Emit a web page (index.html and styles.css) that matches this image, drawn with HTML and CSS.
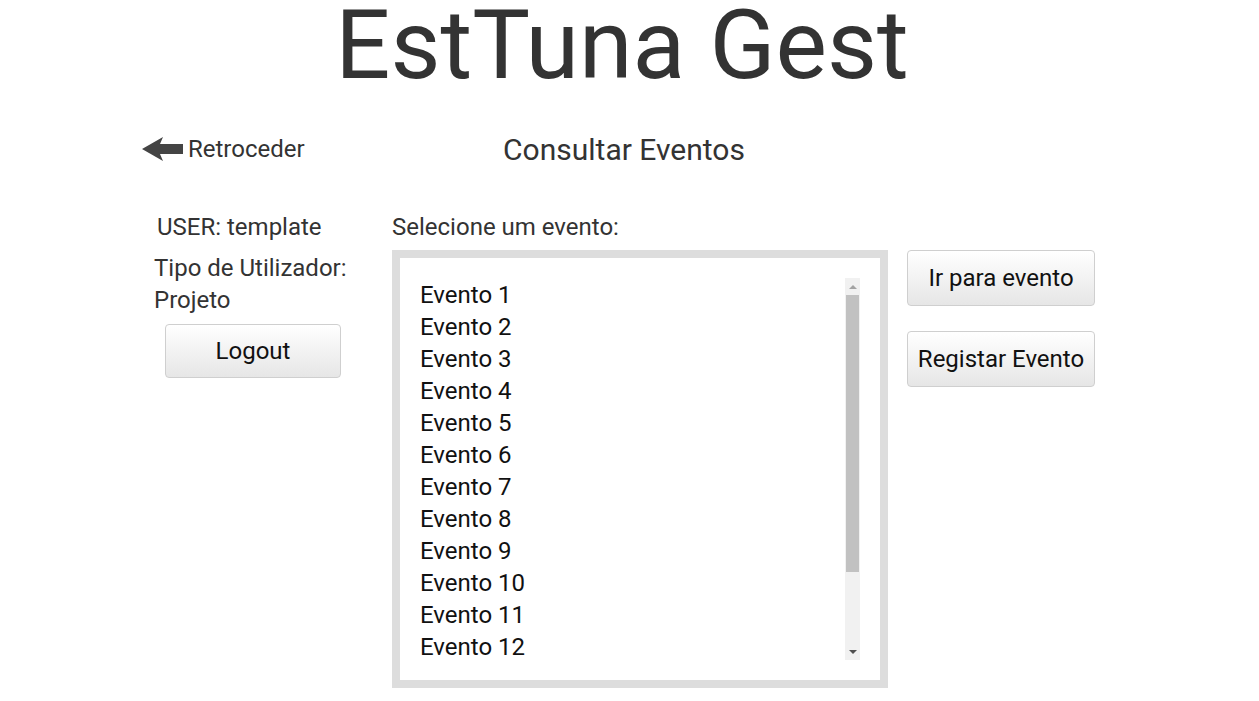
FILE: index.html
```html
<!DOCTYPE html>
<html lang="pt">
<head>
<meta charset="utf-8">
<title>EstTuna Gest</title>
<link rel="stylesheet" href="styles.css">
</head>
<body>
<h1 class="brand">EstTuna Gest</h1>
<div class="page">
  <div class="head-row">
    <a class="back" href="#">
      <svg class="back-icon" width="41" height="26" viewBox="0 0 41 26"><polygon points="0,13 21,1 18,8 41,8 41,18 18,18 21,25" fill="#444"/></svg>
      <span>Retroceder</span>
    </a>
    <h2 class="page-title">Consultar Eventos</h2>
  </div>
  <div class="body-row">
    <div class="user-col">
      <div class="user-name">USER: template</div>
      <div class="user-type">Tipo de Utilizador:<br>Projeto</div>
      <button class="btn btn-logout">Logout</button>
    </div>
    <div class="list-col">
      <div class="list-label">Selecione um evento:</div>
      <div class="listbox">
        <div class="list-inner">
          <ul class="items">
            <li>Evento 1</li><li>Evento 2</li><li>Evento 3</li><li>Evento 4</li><li>Evento 5</li><li>Evento 6</li><li>Evento 7</li><li>Evento 8</li><li>Evento 9</li><li>Evento 10</li><li>Evento 11</li><li>Evento 12</li>
          </ul>
          <div class="scrollbar">
            <div class="sb-btn"><span class="tri-up"></span></div>
            <div class="sb-thumb"></div>
            <div class="sb-space"></div>
            <div class="sb-btn"><span class="tri-down"></span></div>
          </div>
        </div>
      </div>
    </div>
    <div class="action-col">
      <button class="btn btn-action">Ir para evento</button>
      <button class="btn btn-action">Registar Evento</button>
    </div>
  </div>
</div>
</body>
</html>
```
FILE: styles.css
```css
* { box-sizing: border-box; }
html, body { margin: 0; padding: 0; background: #fff; }
body { font-family: Roboto, "Liberation Sans", sans-serif; color: #333; }

.brand {
  margin: 0;
  padding-right: 15px;
  font-size: 97px;
  font-weight: 400;
  line-height: 90px;
  text-align: center;
  color: #333;
}

.page { width: 975px; margin: 0 auto; }

.head-row {
  display: flex;
  align-items: center;
  height: 40px;
  margin-top: 39px;
}
.back {
  width: 250px;
  display: flex;
  align-items: center;
  gap: 5px;
  color: #333;
  text-decoration: none;
  font-size: 24px;
}
.back-icon { display: block; }
.page-title {
  margin: 0;
  width: 496px;
  padding-right: 32px;
  text-align: center;
  font-size: 30px;
  font-weight: 400;
  color: #333;
}

.body-row {
  display: grid;
  grid-template-columns: 231px 496px 188px;
  column-gap: 19px;
  margin-top: 42px;
}

.user-col { font-size: 24px; line-height: 32px; }
.user-name { padding-left: 15px; }
.user-type { padding-left: 12px; margin-top: 9px; }
.btn {
  font-family: Roboto, "Liberation Sans", sans-serif;
  font-size: 24px;
  color: #111;
  background: linear-gradient(#ffffff, #e6e6e6);
  border: 1px solid #cfcfcf;
  border-radius: 4px;
  padding: 0;
}
.btn-logout { margin: 8px 0 0 23px; width: 176px; height: 54px; }

.list-label { font-size: 24px; line-height: 32px; }
.listbox {
  margin-top: 7px;
  width: 496px;
  height: 438px;
  border: 8px solid #dddddd;
  padding: 20px;
  background: #fff;
}
.list-inner { display: flex; height: 382px; }
.items {
  flex: 1;
  list-style: none;
  margin: 0;
  padding: 1px 0 0 0;
  overflow: hidden;
  font-size: 24px;
  line-height: 32px;
  color: #111;
}
.scrollbar {
  width: 15px;
  background: #f1f1f1;
  display: flex;
  flex-direction: column;
}
.sb-btn { height: 17px; display: flex; align-items: center; justify-content: center; }
.tri-up { width: 0; height: 0; border-left: 4px solid transparent; border-right: 4px solid transparent; border-bottom: 4px solid #a3a3a3; }
.tri-down { width: 0; height: 0; border-left: 4px solid transparent; border-right: 4px solid transparent; border-top: 4px solid #505050; }
.sb-thumb { height: 277px; margin: 0 1px; background: #c1c1c1; }
.sb-space { flex: 1; }

.action-col { display: flex; flex-direction: column; gap: 25px; padding-top: 39px; }
.btn-action { width: 188px; height: 56px; }
```
